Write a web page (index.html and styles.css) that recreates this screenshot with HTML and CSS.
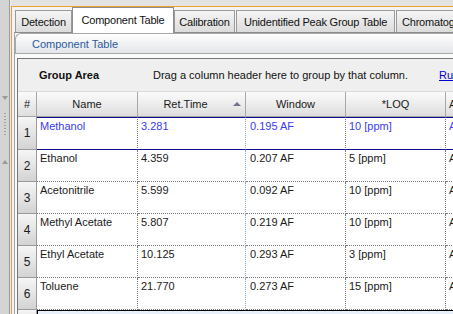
FILE: index.html
```html
<!DOCTYPE html>
<html>
<head>
<meta charset="utf-8">
<link rel="stylesheet" href="styles.css">
</head>
<body>
<div class="app">
  <div class="splitter">
    <span class="arrow-down"></span>
    <span class="grip"></span>
    <span class="arrow-up"></span>
  </div>
  <div class="main">
    <div class="frame">
      <div class="tabs">
        <div class="tab t-det">Detection</div>
        <div class="tab active t-comp">Component Table</div>
        <div class="tab t-cal">Calibration</div>
        <div class="tab t-unid">Unidentified Peak Group Table</div>
        <div class="tab t-chrom">Chromatogram</div>
      </div>
      <div class="panel">
        <div class="panel-head">Component Table</div>
        <div class="grid">
          <div class="group-area">
            <span class="grp-title">Group Area</span>
            <span class="grp-hint">Drag a column header here to group by that column.</span>
            <span class="grp-link">Run</span>
          </div>
          <div class="row head-row">
            <div class="h">#</div>
            <div class="h">Name</div>
            <div class="h h-sort"><span class="h-text">Ret.Time</span><span class="sort"></span></div>
            <div class="h">Window</div>
            <div class="h">*LOQ</div>
            <div class="h h-last">Area</div>
          </div>
          <div class="row data-row current">
            <div class="num">1</div>
            <div class="c">Methanol</div>
            <div class="c ret">3.281</div>
            <div class="c win">0.195 AF</div>
            <div class="c">10 [ppm]</div>
            <div class="c last">Area</div>
          </div>
          <div class="row data-row">
            <div class="num">2</div>
            <div class="c">Ethanol</div>
            <div class="c ret">4.359</div>
            <div class="c win">0.207 AF</div>
            <div class="c">5 [ppm]</div>
            <div class="c last">Area</div>
          </div>
          <div class="row data-row">
            <div class="num">3</div>
            <div class="c">Acetonitrile</div>
            <div class="c ret">5.599</div>
            <div class="c win">0.092 AF</div>
            <div class="c">10 [ppm]</div>
            <div class="c last">Area</div>
          </div>
          <div class="row data-row">
            <div class="num">4</div>
            <div class="c">Methyl Acetate</div>
            <div class="c ret">5.807</div>
            <div class="c win">0.219 AF</div>
            <div class="c">10 [ppm]</div>
            <div class="c last">Area</div>
          </div>
          <div class="row data-row">
            <div class="num">5</div>
            <div class="c">Ethyl Acetate</div>
            <div class="c ret">10.125</div>
            <div class="c win">0.293 AF</div>
            <div class="c">3 [ppm]</div>
            <div class="c last">Area</div>
          </div>
          <div class="row data-row">
            <div class="num">6</div>
            <div class="c">Toluene</div>
            <div class="c ret">21.770</div>
            <div class="c win">0.273 AF</div>
            <div class="c">15 [ppm]</div>
            <div class="c last">Area</div>
          </div>
          <div class="row new-row">
            <div class="num"></div>
            <div class="n first"></div>
            <div class="n"></div>
            <div class="n"></div>
            <div class="n"></div>
            <div class="n"></div>
          </div>
        </div>
      </div>
    </div>
  </div>
</div>
</body>
</html>
```
FILE: styles.css
```css
* { box-sizing: border-box; }
html, body { margin: 0; padding: 0; }
body {
  width: 453px;
  height: 314px;
  overflow: hidden;
  font-family: "Liberation Sans", Arial, sans-serif;
  font-size: 11px;
  color: #1a1a1a;
  background: #e3e3e3;
}

.app { display: flex; height: 314px; }

.splitter {
  width: 10px;
  flex: none;
  background: #d4d4d4;
  border-right: 1px solid #9d9d9d;
  display: flex;
  flex-direction: column;
  align-items: center;
  padding-top: 96px;
}
.arrow-down {
  width: 0; height: 0;
  border-left: 3px solid transparent;
  border-right: 3px solid transparent;
  border-top: 4px solid #9a9a9a;
}
.grip {
  margin-top: 13px;
  width: 2px;
  height: 22px;
  background: repeating-linear-gradient(to bottom, #a2a2a2 0 1px, transparent 1px 3px);
}
.arrow-up {
  margin-top: 25px;
  width: 0; height: 0;
  border-left: 3px solid transparent;
  border-right: 3px solid transparent;
  border-bottom: 4px solid #9a9a9a;
}

.main {
  flex: 1;
  min-width: 0;
  border-left: 1px solid #ececec;
  padding-top: 6px;
  display: flex;
  flex-direction: column;
}
.frame {
  flex: 1;
  min-height: 0;
  border-top: 1px solid #f0a030;
  border-left: 1px solid #f0a030;
  background: #f3f3f3;
  display: flex;
  flex-direction: column;
}

.tabs {
  display: flex;
  align-items: flex-end;
  height: 25px;
  padding-left: 3px;
  flex: none;
}
.tab {
  flex: none;
  height: 22px;
  border: 1px solid #9a9a9a;
  border-bottom: none;
  background: linear-gradient(#f5f5f5, #dcdcdc);
  display: flex;
  align-items: center;
  justify-content: center;
  white-space: nowrap;
  overflow: hidden;
  letter-spacing: -0.2px;
  color: #111;
  font-size: 11px;
}
.tab.active {
  height: 26px;
  margin-bottom: -1px;
  background: #fff;
  border-color: #8d8d8d;
  position: relative;
  z-index: 1;
  padding-bottom: 2px;
}
.t-det { width: 57px; }
.t-comp { width: 102px; }
.t-cal { width: 61px; }
.t-unid { width: 159px; margin-left: 1px; }
.t-chrom { width: 90px; margin-left: 1px; justify-content: flex-start; padding-left: 5px; }

.panel {
  flex: 1;
  min-height: 0;
  margin-left: 2px;
  border-top: 1px solid #8c8c8c;
  border-left: 1px solid #a4a4a4;
  background: #fafafa;
  display: flex;
  flex-direction: column;
}
.panel-head {
  flex: none;
  height: 21px;
  border: 1px solid #a9a9a9;
  border-right: none;
  border-top-left-radius: 6px;
  background: linear-gradient(#fefefe, #e4e5ea);
  color: #2c5aa0;
  padding-left: 16px;
  display: flex;
  align-items: center;
}

.grid {
  flex: 1;
  min-height: 0;
  margin: 4px 0 0 2px;
  border-top: 1px solid #767676;
  border-left: 1px solid #767676;
  background: #fff;
  overflow: hidden;
}

.group-area {
  height: 33px;
  background: #efefef;
  border-bottom: 1px solid #dadada;
  display: flex;
  align-items: center;
  padding-left: 21px;
  white-space: nowrap;
}
.grp-title { flex: none; width: 114px; font-weight: bold; color: #111; }
.grp-hint { flex: none; width: 286px; color: #111; }
.grp-link { flex: none; color: #0000d0; text-decoration: underline; }

.row {
  display: grid;
  grid-template-columns: 19px 101px 108px 100px 100px 100px;
}

.head-row { height: 25px; }
.h {
  background: linear-gradient(#fbfbfb, #dedede);
  border-right: 1px solid #a8a8a8;
  border-bottom: 1px solid #a4a4a4;
  display: flex;
  align-items: center;
  justify-content: center;
  color: #1a1a1a;
  white-space: nowrap;
  overflow: hidden;
}
.h-sort { justify-content: flex-start; }
.h-text { flex: 1; text-align: center; }
.sort {
  flex: none;
  width: 0; height: 0;
  margin-right: 4px;
  border-left: 4px solid transparent;
  border-right: 4px solid transparent;
  border-bottom: 4px solid #72728e;
}
.h-last { border-right: none; justify-content: flex-start; padding-left: 3px; }

.data-row { height: 32px; }
.num {
  background: linear-gradient(#f6f6f6, #d3d3d3);
  border-right: 1px solid #9a9a9a;
  border-bottom: 1px solid #9a9a9a;
  display: flex;
  align-items: center;
  justify-content: center;
  font-size: 12px;
  color: #1a1a1a;
}
.c {
  border-right: 1px dotted #7a7a7a;
  border-bottom: 1px dotted #7a7a7a;
  padding: 2px 0 0 3px;
  line-height: 13px;
  white-space: nowrap;
  overflow: hidden;
  color: #1a1a1a;
}
.c.ret { border-right-color: #8ea6c8; }
.c.win { padding-left: 4px; }
.c.last { border-right: none; }

.data-row.current { height: 33px; }
.current .c {
  border-top: 1px solid #10109a;
  border-bottom: 1px solid #10109a;
  color: #3a3af2;
}

.new-row { height: 20px; }
.n {
  background: #e8f1fb;
  border-top: 1px solid #000;
}
.n.first { border-left: 1px solid #000; }
```
